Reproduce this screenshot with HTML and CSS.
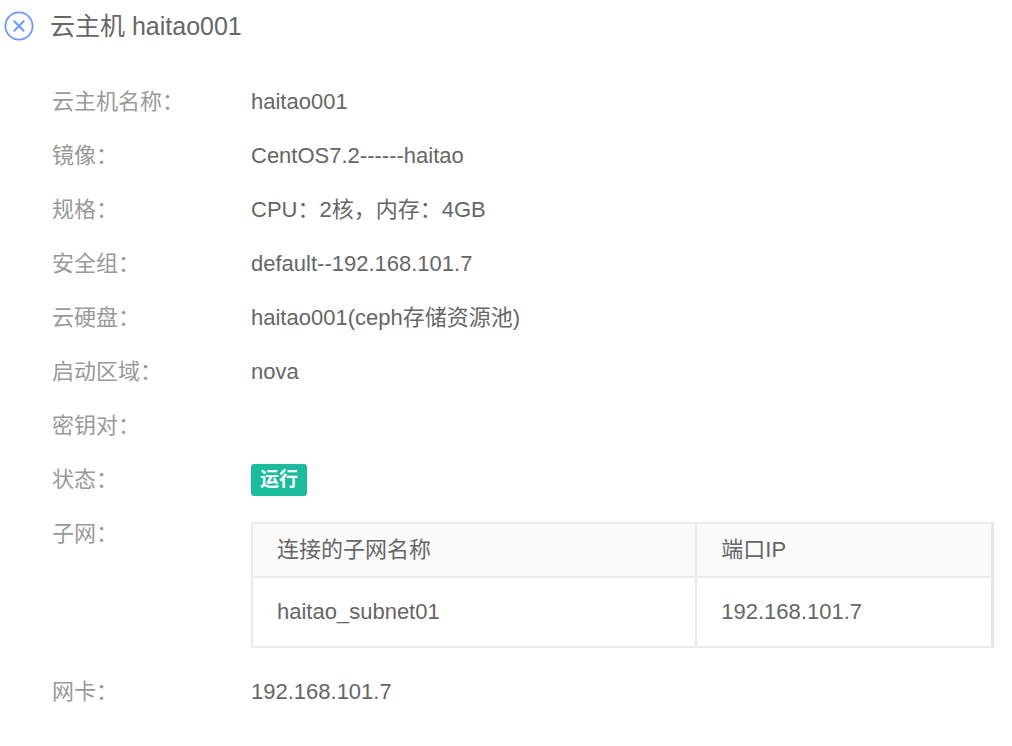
FILE: index.html
```html
<!DOCTYPE html>
<html lang="zh-CN">

<head>
    <meta charset="UTF-8">
    <meta name="viewport" content="width=device-width, initial-scale=1.0">
    <title>云主机 haitao001</title>
    <link rel="stylesheet" href="styles.css">
</head>

<body>
    <div class="detail">
        <header class="detail-header">
            <button type="button" class="close-btn" aria-label="关闭">
                <svg width="30" height="30" viewBox="0 0 30 30" fill="none" stroke="#7099fb">
                    <circle cx="15" cy="15" r="13.6" stroke-width="1.8" />
                    <path d="M9.8 9.8l10.4 10.4M20.2 9.8L9.8 20.2" stroke-width="2" />
                </svg>
            </button>
            <h1>云主机 haitao001</h1>
        </header>
        <dl class="info">
            <dt>云主机名称：</dt>
            <dd>haitao001</dd>
            <dt>镜像：</dt>
            <dd>CentOS7.2------haitao</dd>
            <dt>规格：</dt>
            <dd>CPU：2核，内存：4GB</dd>
            <dt>安全组：</dt>
            <dd>default--192.168.101.7</dd>
            <dt>云硬盘：</dt>
            <dd>haitao001(ceph存储资源池)</dd>
            <dt>启动区域：</dt>
            <dd>nova</dd>
            <dt>密钥对：</dt>
            <dd></dd>
            <dt>状态：</dt>
            <dd><span class="status">运行</span></dd>
            <dt>子网：</dt>
            <dd>
                <table class="subnet">
                    <thead>
                        <tr>
                            <th class="col-name">连接的子网名称</th>
                            <th>端口IP</th>
                        </tr>
                    </thead>
                    <tbody>
                        <tr>
                            <td>haitao_subnet01</td>
                            <td>192.168.101.7</td>
                        </tr>
                    </tbody>
                </table>
            </dd>
            <dt>网卡：</dt>
            <dd>192.168.101.7</dd>
        </dl>
    </div>
</body>

</html>
```
FILE: styles.css
```css
body {
    margin: 0;
    font-family: "Liberation Sans", "Noto Sans CJK SC", sans-serif;
    font-size: 22px;
    line-height: 32px;
    color: #666;
    background: #fff;
}

.detail {
    padding: 8px 18px 24px 4px;
}

.detail-header {
    display: flex;
    align-items: center;
    gap: 16px;
    height: 36px;
}

.detail-header h1 {
    margin: 0;
    font-size: 25px;
    font-weight: normal;
    line-height: 36px;
    color: #666;
}

.close-btn {
    display: flex;
    padding: 0;
    border: 0;
    background: none;
    cursor: pointer;
}

.info {
    display: grid;
    grid-template-columns: 199px 1fr;
    row-gap: 22px;
    margin: 42px 0 0 48px;
}

.info dt {
    color: #999;
}

.info dd {
    margin: 0;
}

.status {
    display: inline-block;
    padding: 0 9px;
    border-radius: 3px;
    font-size: 19px;
    font-weight: bold;
    color: #fff;
    background: #1abc9c;
    vertical-align: top;
}

.subnet {
    width: 100%;
    margin: 4px 0 6px;
    border: 2px solid #ebebeb;
    border-right: 3px solid #e5e5e5;
    border-collapse: collapse;
    table-layout: fixed;
}

.subnet th,
.subnet td {
    padding: 10px 24px;
    border: 2px solid #ebebeb;
    font-weight: normal;
    text-align: left;
}

.subnet th {
    background: #fafafa;
}

.subnet td {
    padding: 18px 24px;
}

.subnet .col-name {
    width: 60%;
    box-sizing: border-box;
}
```
